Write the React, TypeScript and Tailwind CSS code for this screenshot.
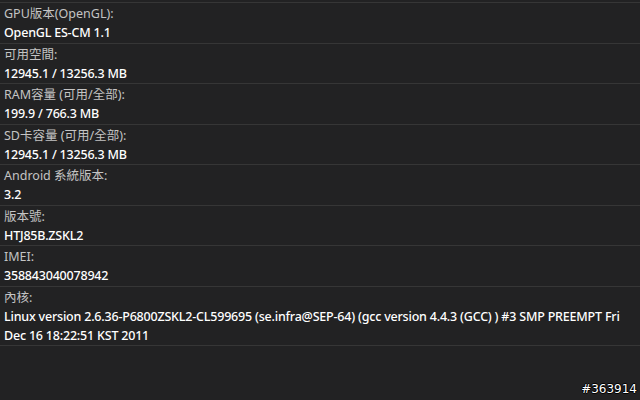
const rows: { label: string; value: string[] }[] = [
  { label: "GPU版本(OpenGL):", value: ["OpenGL ES-CM 1.1"] },
  { label: "可用空間:", value: ["12945.1 / 13256.3 MB"] },
  { label: "RAM容量 (可用/全部):", value: ["199.9 / 766.3 MB"] },
  { label: "SD卡容量 (可用/全部):", value: ["12945.1 / 13256.3 MB"] },
  { label: "Android 系統版本:", value: ["3.2"] },
  { label: "版本號:", value: ["HTJ85B.ZSKL2"] },
  { label: "IMEI:", value: ["358843040078942"] },
  {
    label: "內核:",
    value: [
      "Linux version 2.6.36-P6800ZSKL2-CL599695 (se.infra@SEP-64) (gcc version 4.4.3 (GCC) ) #3 SMP PREEMPT Fri",
      "Dec 16 18:22:51 KST 2011",
    ],
  },
];

export default function App() {
  return (
    <div
      className="relative w-[640px] h-[400px] overflow-hidden bg-[#222223] text-[12.5px]"
      style={{ fontFamily: '"Noto Sans", "Noto Sans CJK TC", sans-serif' }}
    >
      <div className="h-[3px] border-b border-[#363636]" />
      {rows.map((row) => (
        <div
          key={row.label}
          className="border-b border-[#363636] pl-[4px] pt-[1px] pb-[0.5px]"
        >
          <div className="h-[19px] leading-[19px] text-[#c4c4c4]">{row.label}</div>
          {row.value.map((line) => (
            <div
              key={line}
              className="h-[19px] leading-[19px] text-white font-medium tracking-[-0.2px] whitespace-nowrap"
            >
              {line}
            </div>
          ))}
        </div>
      ))}

      {/* 浮水印 */}
      <div
        className="absolute right-[3px] bottom-[4px] text-[12px] leading-[14px] text-white"
        style={{
          fontFamily: '"DejaVu Sans", sans-serif',
          textShadow:
            "1px 0 0 #000, -1px 0 0 #000, 0 1px 0 #000, 0 -1px 0 #000",
        }}
      >
        #363914
      </div>
    </div>
  );
}
